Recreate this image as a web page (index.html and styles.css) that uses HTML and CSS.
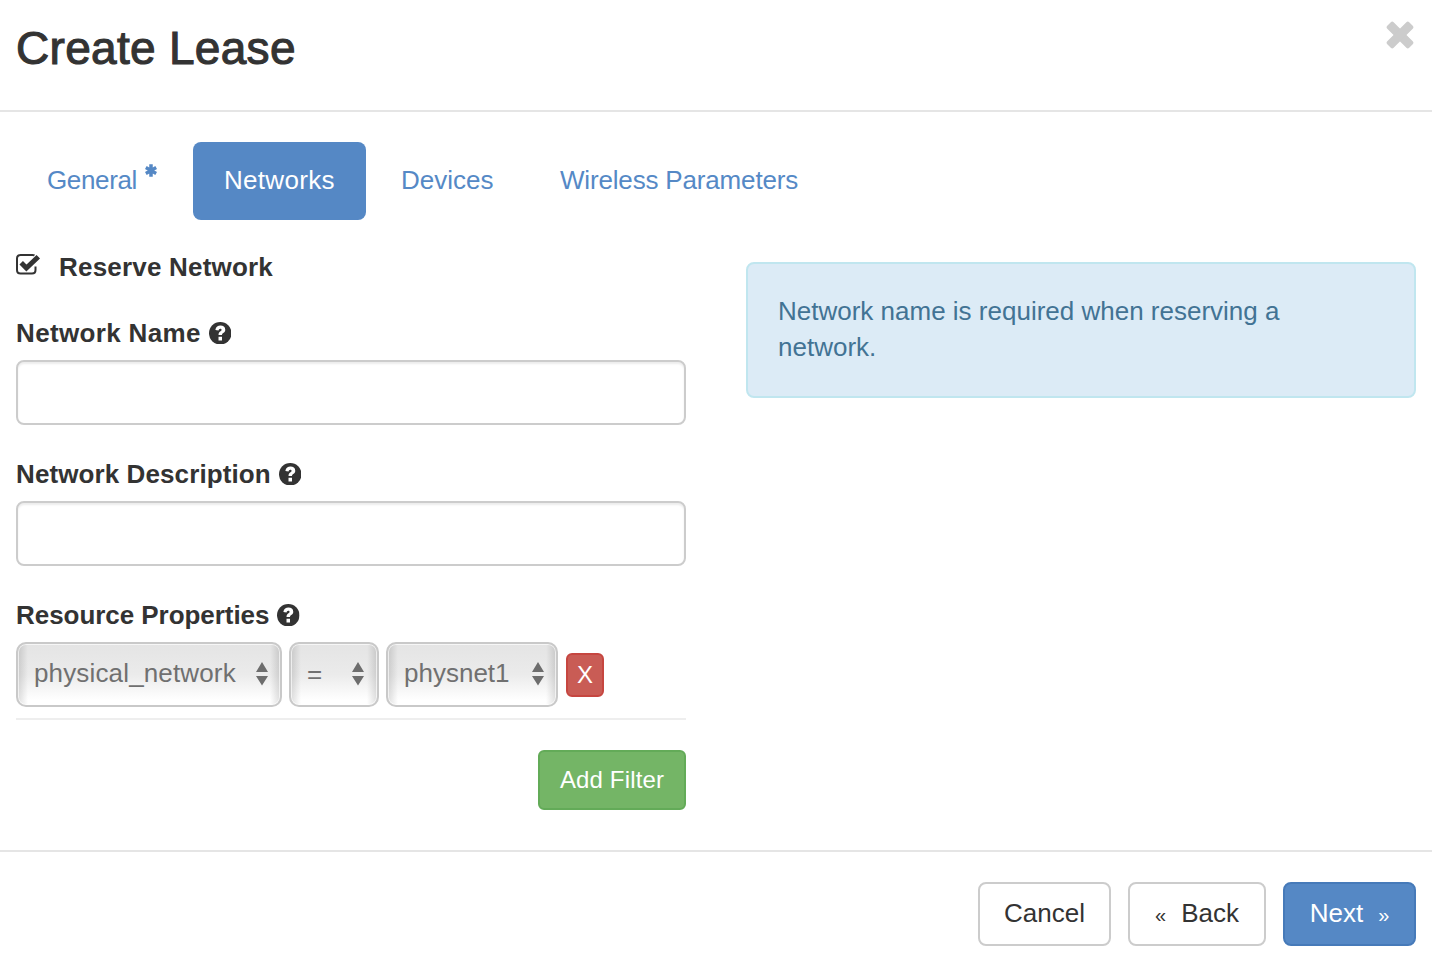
FILE: index.html
```html
<!DOCTYPE html>
<html lang="en">
<head>
<meta charset="utf-8">
<title>Create Lease</title>
<link rel="stylesheet" href="styles.css">
</head>
<body>
<svg class="defs" aria-hidden="true">
  <symbol id="help" viewBox="0 0 22 22">
    <circle cx="11" cy="11" r="11"/>
    <path class="mark" d="M6.200 7.700C6.800 4.700 8.700 3.500 11.200 3.500c2.700 0 4.700 1.500 4.700 4 0 1.700-.8 2.500-2 3.300-.8.600-1.200 1-1.200 2H9.300c0-2 .6-2.900 1.900-3.700.8-.5 1.100-.9 1.100-1.500 0-.7-.5-1.100-1.200-1.100-1 0-1.500.7-1.700 1.800zM9.300 14.500h3.400v3.700H9.300z"/>
  </symbol>
  <symbol id="sort" viewBox="0 0 12 24"><path d="M6 0l6 10H0zM0 14h12L6 23.500z"/></symbol>
</svg>
<div class="modal">
  <header class="modal-header">
    <h1 class="title">Create Lease</h1>
    <button class="close" aria-label="Close"><svg width="28" height="28" viewBox="0 0 28 28"><g transform="rotate(45 14 14)"><rect x="-1.500" y="9.500" width="31" height="9" rx="2"/><rect x="9.500" y="-1.500" width="9" height="31" rx="2"/></g></svg></button>
  </header>
  <main class="modal-body">
    <nav class="tabs">
      <a class="tab tab-general">General<svg class="required" width="12" height="13" viewBox="0 0 12 13"><path d="M6 .3v12.400M.8 3.500l10.400 6M11.200 3.500l-10.400 6"/></svg></a>
      <a class="tab active">Networks</a>
      <a class="tab tab-devices">Devices</a>
      <a class="tab tab-wireless">Wireless Parameters</a>
    </nav>
    <div class="columns">
      <form class="form">
        <label class="check">
          <svg class="check-icon" width="25" height="22" viewBox="0 0 25 22"><path class="box" d="M18.500 1.400Q17.800 1 16.500 1H4.500Q1 1 1 4.500v11.500Q1 19.500 4.500 19.500h11.500q3.500 0 3.500-3.500v-3.500"/><path class="tick" d="M5.200 8.800l5.200 5.200L22.300 2.700"/></svg>
          <span>Reserve Network</span>
        </label>
        <div class="group">
          <div class="label label-name"><span>Network Name</span><svg class="help"><use href="#help"/></svg></div>
          <input class="input" type="text" aria-label="Network Name">
        </div>
        <div class="group">
          <div class="label label-description"><span>Network Description</span><svg class="help"><use href="#help"/></svg></div>
          <input class="input" type="text" aria-label="Network Description">
        </div>
        <div class="label label-properties"><span>Resource Properties</span><svg class="help"><use href="#help"/></svg></div>
        <div class="filters">
          <div class="select property"><span>physical_network</span><svg class="sort"><use href="#sort"/></svg></div>
          <div class="select operator"><span class="equals">=</span><svg class="sort"><use href="#sort"/></svg></div>
          <div class="select value"><span>physnet1</span><svg class="sort"><use href="#sort"/></svg></div>
          <button class="remove" type="button">X</button>
        </div>
        <button class="add" type="button">Add Filter</button>
      </form>
      <aside class="info">Network name is required when reserving a network.</aside>
    </div>
  </main>
  <footer class="modal-footer">
    <button class="btn cancel">Cancel</button>
    <button class="btn back"><span class="chevrons">«</span>Back</button>
    <button class="btn next">Next<span class="chevrons">»</span></button>
  </footer>
</div>
</body>
</html>
```
FILE: styles.css
```css
* { box-sizing: border-box; }
body {
  margin: 0;
  background: #fff;
  color: #333;
  font: 26px/36px "Helvetica Neue", "Liberation Sans", Arial, sans-serif;
}
button, input { font: inherit; margin: 0; }
button { padding: 0; }
.defs { position: absolute; width: 0; height: 0; }
.mark { fill: #fff; }
.modal { height: 964px; display: flex; flex-direction: column; overflow: hidden; }
.modal-header {
  height: 112px;
  padding: 20px 18px 0 16px;
  border-bottom: 2px solid #e5e5e5;
  display: flex;
  justify-content: space-between;
  align-items: flex-start;
}
.title {
  margin: 2px 0 0;
  font-size: 46px;
  line-height: 52px;
  font-weight: 400;
  letter-spacing: .3px;
  -webkit-text-stroke: 1.1px #333;
}
.close { border: 0; background: none; width: 28px; height: 28px; margin-top: 1px; }
.close svg { display: block; fill: #ccc; }
.modal-body { height: 738px; padding: 30px 16px 0; }
.tabs { display: flex; gap: 4px; height: 78px; }
.tab {
  display: flex;
  padding: 20px 31px 0;
  border-radius: 8px;
  color: #5589c6;
}
.tab-general { width: 173px; letter-spacing: -.35px; }
.tab.active { width: 173px; background: #5588c5; color: #fff; letter-spacing: .3px; }
.tab-devices { width: 155px; }
.tab-wireless { letter-spacing: -.17px; }
.required { margin: 2px 0 0 8px; flex: none; fill: none; stroke: #5588c5; stroke-width: 3.500px; }
.columns { display: flex; gap: 60px; align-items: flex-start; margin-top: 28px; }
.form { width: 670px; display: flex; flex-direction: column; }
.check { display: flex; gap: 18px; margin-bottom: 30px; padding-top: 1px; font-weight: 700; letter-spacing: .2px; }
.check-icon { margin-top: 5px; fill: none; stroke: #333; }
.box { stroke-width: 2px; }
.tick { stroke-width: 5px; }
.label { height: 45px; display: flex; gap: 8px; font-weight: 700; }
.label-name { letter-spacing: .35px; }
.label-description { letter-spacing: .1px; }
.label-properties { letter-spacing: -.05px; }
.help { width: 22.500px; height: 22.500px; margin-top: 6.500px; fill: #333; }
.group { height: 141px; }
.input {
  display: block;
  width: 100%;
  height: 65px;
  padding: 12px 24px;
  border: 2px solid #ccc;
  border-radius: 8px;
  background: #fff;
  box-shadow: inset 0 2px 2px rgba(0, 0, 0, .075);
}
.filters { display: flex; gap: 8px; height: 78px; border-bottom: 2px solid #eee; }
.select {
  height: 65px;
  display: flex;
  justify-content: space-between;
  padding: 11px 12px 0 16px;
  border: 2px solid #c9c9c9;
  border-radius: 10px;
  color: #707070;
  background:
    linear-gradient(90deg, rgba(0,0,0,.13), transparent 10px, transparent calc(100% - 10px), rgba(0,0,0,.13)),
    linear-gradient(#e4e4e4, #ebebeb 50%, #fff 92%);
  box-shadow: inset 0 0 0 1px rgba(255,255,255,.65);
}
.property { width: 266px; letter-spacing: .15px; }
.operator { width: 90px; margin-left: -1px; padding-right: 13px; }
.value { width: 172px; margin-left: -1px; }
.equals { margin-top: 1px; }
.sort { width: 12px; height: 24px; margin-top: 7px; fill: #6d6d6d; }
.remove {
  width: 38px;
  height: 44px;
  margin-top: 11px;
  border: 2px solid #c64640;
  border-radius: 6px;
  background: #c95c55;
  color: #fff;
  font-size: 24px;
}
.add {
  align-self: flex-end;
  width: 148px;
  height: 60px;
  margin-top: 30px;
  border: 2px solid #63ab58;
  border-radius: 6px;
  background: #74b566;
  color: #fff;
  font-size: 24px;
  letter-spacing: .15px;
}
.info {
  width: 670px;
  height: 136px;
  margin-top: 14px;
  padding: 29px 30px;
  border: 2px solid #c0e6ef;
  border-radius: 8px;
  background: #dcebf6;
  color: #427394;
}
.modal-footer {
  height: 114px;
  padding: 30px 16px 0;
  border-top: 2px solid #e5e5e5;
  display: flex;
  justify-content: flex-end;
}
.btn {
  height: 64px;
  padding-bottom: 2px;
  border: 2px solid #ccc;
  border-radius: 8px;
  background: #fff;
  color: #333;
}
.cancel { width: 133px; margin-right: 17px; }
.back { width: 138px; margin-right: 17px; }
.next { width: 133px; background: #5588c5; border-color: #467ab9; color: #fff; }
.chevrons { font-size: 20px; line-height: 1; }
.back .chevrons { margin-right: 15px; }
.next .chevrons { margin-left: 15px; }
```
